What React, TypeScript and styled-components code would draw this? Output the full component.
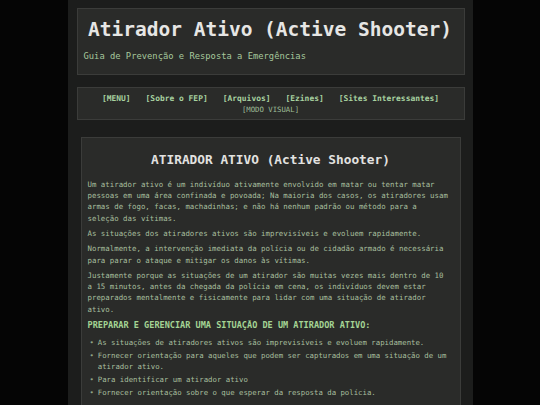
import React from 'react';
import styled, { createGlobalStyle } from 'styled-components';

const GlobalStyle = createGlobalStyle`
  html, body {
    margin: 0;
    padding: 0;
    background: #050505;
  }
  body {
    font-family: "DejaVu Sans Mono", "Liberation Mono", monospace;
  }
`;

const links = ['[MENU]', '[Sobre o FEP]', '[Arquivos]', '[Ezines]', '[Sites Interessantes]'];

const bullets = [
  'As situações de atiradores ativos são imprevisíveis e evoluem rapidamente.',
  'Fornecer orientação para aqueles que podem ser capturados em uma situação de um atirador ativo.',
  'Para identificar um atirador ativo',
  'Fornecer orientação sobre o que esperar da resposta da polícia.',
];

function App() {
  return (
    <>
      <GlobalStyle />
      <Column>
        <Header>
          <Title>Atirador Ativo (Active Shooter)</Title>
          <Subtitle>Guia de Prevenção e Resposta a Emergências</Subtitle>
        </Header>
        <Nav>
          <NavLinks>
            {links.map((l) => (
              <NavLink key={l} href="#">
                {l}
              </NavLink>
            ))}
          </NavLinks>
          <ModeLink href="#">[MODO VISUAL]</ModeLink>
        </Nav>
        <Content>
          <Heading>ATIRADOR ATIVO (Active Shooter)</Heading>
          <Para>
            Um atirador ativo é um indivíduo ativamente envolvido em matar ou tentar matar
            pessoas em uma área confinada e povoada; Na maioria dos casos, os atiradores usam
            armas de fogo, facas, machadinhas; e não há nenhum padrão ou método para a
            seleção das vítimas.
          </Para>
          <Para>As situações dos atiradores ativos são imprevisíveis e evoluem rapidamente.</Para>
          <Para>
            Normalmente, a intervenção imediata da polícia ou de cidadão armado é necessária
            para parar o ataque e mitigar os danos às vítimas.
          </Para>
          <Para>
            Justamente porque as situações de um atirador são muitas vezes mais dentro de 10
            a 15 minutos, antes da chegada da polícia em cena, os indivíduos devem estar
            preparados mentalmente e fisicamente para lidar com uma situação de atirador
            ativo.
          </Para>
          <SubHeading>PREPARAR E GERENCIAR UMA SITUAÇÃO DE UM ATIRADOR ATIVO:</SubHeading>
          <List>
            {bullets.map((b) => (
              <Item key={b}>{b}</Item>
            ))}
          </List>
        </Content>
      </Column>
    </>
  );
}

const Column = styled.div`
  width: 405px;
  margin: 0 auto;
  min-height: 405px;
  box-sizing: border-box;
  background: #1c1d1c;
  padding: 8px 8px 0 9px;
`;

const Header = styled.header`
  background: #2a2b29;
  border: 1px solid #3b3c3a;
  padding: 9px 7px 11px 6px;
`;

const Title = styled.h1`
  margin: 0 0 8px;
  font-size: 19.5px;
  line-height: 24px;
  font-weight: 700;
  color: #e6e6e4;
  text-align: center;
`;

const Subtitle = styled.p`
  margin: 0;
  font-size: 8.8px;
  line-height: 13px;
  color: #a6c89c;
`;

const Nav = styled.nav`
  margin-top: 12px;
  background: #2a2b29;
  border: 1px solid #3b3c3a;
  padding: 5px 0 4px;
  display: flex;
  flex-direction: column;
  align-items: center;
`;

const NavLinks = styled.div`
  display: flex;
  gap: 15px;
  line-height: 11px;
`;

const NavLink = styled.a`
  font-size: 7.95px;
  font-weight: 700;
  color: #a8d2a0;
  text-decoration: none;
`;

const ModeLink = styled.a`
  font-size: 7.3px;
  line-height: 11px;
  color: #9fbf98;
  text-decoration: none;
`;

const Content = styled.main`
  margin: 17px 4px 0;
  background: #2a2b29;
  border: 1px solid #3b3c3a;
  border-bottom: none;
  padding: 14px 6px 20px 6px;
`;

const Heading = styled.h2`
  margin: 0 0 11px;
  font-size: 12.8px;
  line-height: 16px;
  font-weight: 700;
  color: #e2e2e0;
  text-align: center;
`;

const Para = styled.p`
  margin: 0 3px 4.2px 0;
  font-size: 7.4px;
  line-height: 11.2px;
  color: #a7bf9e;
`;

const SubHeading = styled.h3`
  margin: 4px 0 5px;
  font-size: 8.55px;
  line-height: 13px;
  font-weight: 700;
  color: #a4d494;
`;

const List = styled.ul`
  margin: 0;
  padding: 0 0 0 2px;
  list-style: none;
`;

const Item = styled.li`
  display: flex;
  margin-bottom: 2px;
  font-size: 7.33px;
  line-height: 11px;
  color: #a7bf9e;
  &::before {
    content: '•';
    flex: 0 0 8.3px;
    color: #8fa488;
  }
`;

export default App;
